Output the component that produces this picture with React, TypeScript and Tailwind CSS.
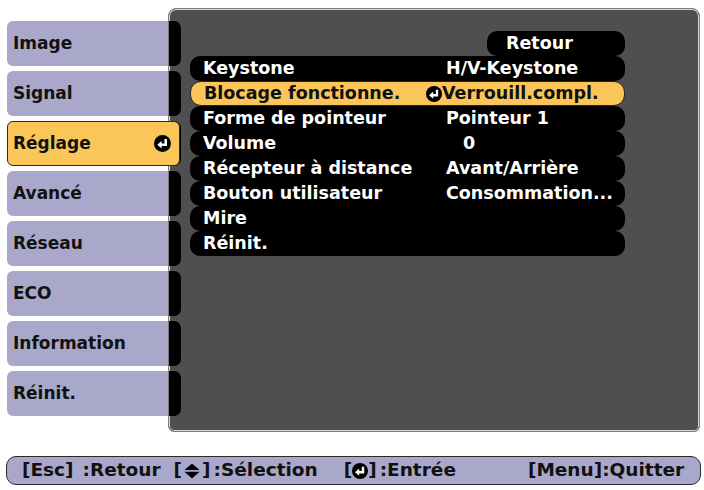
import React from 'react'

const tabs = ['Image', 'Signal', 'Réglage', 'Avancé', 'Réseau', 'ECO', 'Information', 'Réinit.']

interface Row {
  label: string
  value?: string
  pad?: string
  selected?: boolean
}

const rows: Row[] = [
  { label: 'Keystone', value: 'H/V-Keystone' },
  { label: 'Blocage fonctionne.', value: 'Verrouill.compl.', selected: true },
  { label: 'Forme de pointeur', value: 'Pointeur 1' },
  { label: 'Volume', value: '0', pad: 'pl-[38px]' },
  { label: 'Récepteur à distance', value: 'Avant/Arrière' },
  { label: 'Bouton utilisateur', value: 'Consommation...' },
  { label: 'Mire' },
  { label: 'Réinit.' }
]

function EnterIcon({ className }: { className?: string }) {
  return (
    <svg viewBox="0 0 16 16" className={className}>
      <circle cx="8" cy="8" r="8" fill="#000" />
      <path d="M11 3.8 V9.2 H6.5" stroke="#fff" strokeWidth="2.4" fill="none" />
      <path d="M3 9.2 L7.2 5.6 L7.2 12.8 Z" fill="#fff" />
    </svg>
  )
}

function UpDownIcon({ className }: { className?: string }) {
  return (
    <svg viewBox="0 0 16 16" className={className}>
      <path d="M8 0.5 L15.5 7 L0.5 7 Z" fill="#000" />
      <path d="M0.5 8.8 L15.5 8.8 L8 15.5 Z" fill="#000" />
    </svg>
  )
}

export default function App() {
  return (
    <div className="w-[704px] h-[490px] bg-white font-['DejaVu_Sans',sans-serif] font-bold overflow-hidden">
      <div className="flex pt-[8px] pl-[7px]">
        {/* Menu tabs */}
        <div className="relative z-10 flex flex-col gap-[5px] pt-[13px] w-[161px]">
          {tabs.map((t) => {
            const active = t === 'Réglage'
            return (
              <div
                key={t}
                className={
                  active
                    ? 'flex items-center justify-between h-[45px] w-[173px] rounded-[6px] border border-[#2a2a2a] bg-[#fac659] pl-[5px] pr-[8px] text-[17px] leading-none text-[#111]'
                    : 'flex items-center h-[45px] w-[161px] rounded-l-[6px] bg-[#a9a7ca] pl-[6px] text-[17px] leading-none text-[#111]'
                }
              >
                <span>{t}</span>
                {active && <EnterIcon className="w-[17px] h-[17px]" />}
              </div>
            )
          })}
        </div>

        {/* Panel */}
        <div className="flex w-[532px] h-[424px] rounded-t-[8px] rounded-b-[6px] border border-[#7c7c7c] bg-[#4f4f4f] shadow-[inset_0_0_0_1px_#d8d8d8]">
          <div className="flex flex-col gap-[5px] pt-[12px] w-[12px]">
            {tabs.map((t) => (
              <div key={t} className="h-[45px] w-[12px] rounded-r-[7px] bg-black" />
            ))}
          </div>

          <div className="flex flex-col pt-[22px] ml-[9px] w-[435px] text-[17.5px] leading-none">
            <div className="ml-[297px] h-[25px] w-[138px] rounded-[10px] bg-black text-white flex items-center pl-[19px]">
              Retour
            </div>
            {rows.map((r) => (
              <div
                key={r.label}
                className={
                  r.selected
                    ? 'flex items-center h-[25px] rounded-[11px] border border-[#2a2418] bg-[#fac659] text-[#111]'
                    : 'flex items-center h-[25px] rounded-[10px] bg-black text-white'
                }
              >
                <span className="w-[235px] pl-[13px] whitespace-nowrap">{r.label}</span>
                {r.value && (
                  <span className={`flex items-center whitespace-nowrap ${r.selected ? '' : r.pad ?? 'pl-[21px]'}`}>
                    {r.selected && <EnterIcon className="w-[16px] h-[16px]" />}
                    {r.value}
                  </span>
                )}
              </div>
            ))}
          </div>
        </div>
      </div>

      {/* Help bar */}
      <div className="mt-[24px] ml-[6px] flex items-center h-[29px] w-[695px] rounded-[10px] border border-[#2a2a2a] bg-[#a9a7ca] pl-[15px] text-[18.5px] leading-none text-[#111] whitespace-nowrap">
        <span>[Esc]</span>
        <span className="ml-[9px]">:Retour</span>
        <span className="ml-[13px] flex items-center">
          [<UpDownIcon className="w-[16px] h-[16px] mx-[2px]" />]
        </span>
        <span className="ml-[3px]">:Sélection</span>
        <span className="ml-[26px] flex items-center">
          [<EnterIcon className="w-[16px] h-[16px]" />]
        </span>
        <span className="ml-[3px]">:Entrée</span>
        <span className="ml-[72px]">[Menu]:Quitter</span>
      </div>
    </div>
  )
}
